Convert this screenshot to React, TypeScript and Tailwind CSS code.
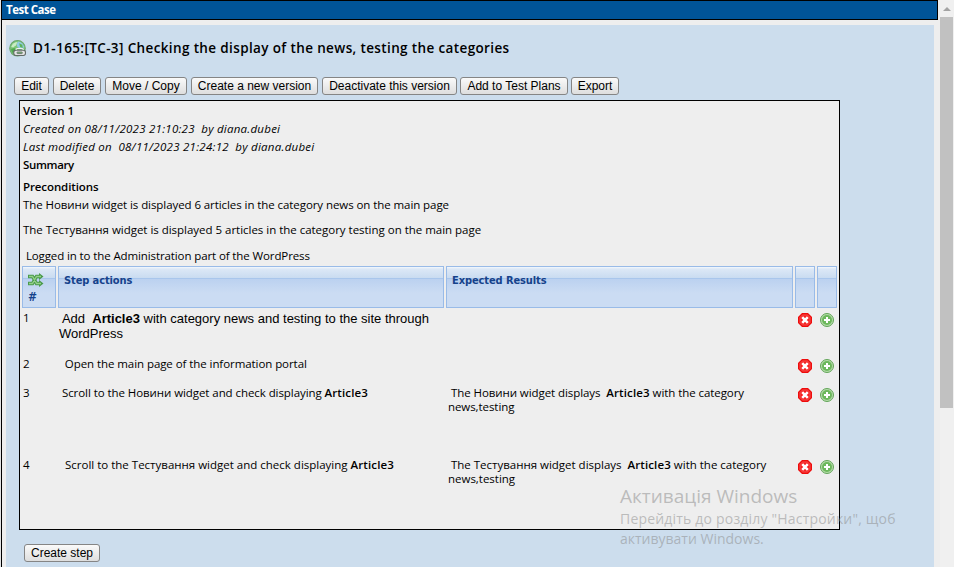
import React from "react";

const TREB = "font-['Trebuchet_MS','Open_Sans',sans-serif]";

function DeleteIcon() {
  return (
    <svg width="14" height="14" viewBox="0 0 14 14" className="block">
      <path d="M4 0h6l4 4v6l-4 4H4l-4-4V4z" fill="#ee0c0c" />
      <path d="M4.500 1.500h5l3 3v5l-3 3h-5l-3-3v-5z" fill="#f5504f" />
      <path d="M4.500 2.500h5l2 2v5l-2 2h-5l-2-2v-5z" fill="#f52020" />
      <path d="M4.200 4.200l5.600 5.600M9.800 4.200l-5.600 5.600" stroke="#fff" strokeWidth="2.600" />
    </svg>
  );
}

function AddIcon() {
  return (
    <svg width="14" height="14" viewBox="0 0 14 14" className="block">
      <circle cx="7" cy="7" r="6.500" fill="#b5dba9" stroke="#62a558" />
      <circle cx="7" cy="7" r="5" fill="#6cb85c" />
      <path d="M7 4v6M4 7h6" stroke="#fff" strokeWidth="2" />
    </svg>
  );
}

function GlobeLinkIcon() {
  return (
    <svg width="17" height="17" viewBox="0 0 16 16" className="block">
      <circle cx="8" cy="7.800" r="7.300" fill="#7cc677" stroke="#6aa56c" />
      <path d="M8.500 1.500c3 .3 5 2.200 5.700 4.800l-1.700 3L8 6.500 7 4z" fill="#8fcbe6" />
      <path d="M9.500 3l3 1.500.5 3-2.500-1z" fill="#5fb358" />
      <path d="M2 8.500l3-1 2 2-2 4C3.500 13 2 10.500 2 8.500z" fill="#4fa84e" />
      <path d="M2 6.500C3 3.500 5.500 1.800 8 1.800L6.500 5 4 7z" fill="#c9ebc4" />
      <rect x="4.500" y="9.500" width="11" height="5" rx="2" fill="#e4e4e4" stroke="#626b67" />
      <rect x="7.500" y="11.300" width="5" height="1.500" rx=".5" fill="#7cc677" stroke="#626b67" strokeWidth=".8" />
      <path d="M6.500 9.500q0-1.500 1.500-1.500h4q1.500 0 1.500 1.500" fill="none" stroke="#f1f1f1" />
    </svg>
  );
}

function ShuffleIcon() {
  return (
    <svg width="16" height="14" viewBox="0 0 16 14" className="block">
      <path d="M0 3.500h4.500l4 7H12M0 10.500h4.500l4-7H12" fill="none" stroke="#4a9a4b" strokeWidth="3.400" />
      <path d="M11 0l4.500 3.500L11 7zM11 7l4.500 3.500L11 14z" fill="#4a9a4b" />
      <path d="M1 3.500h3.500l4 7H13M1 10.500h3.500l4-7H13" fill="none" stroke="#93d089" strokeWidth="1.300" />
    </svg>
  );
}

function Btn({ label, w }: { label: string; w: string }) {
  return (
    <button
      className={`${w} h-[18px] shrink-0 whitespace-nowrap rounded-[3px] border border-[#858585] bg-linear-to-b from-[#fafafa] to-[#dedede] text-center font-['Liberation_Sans',Arial,sans-serif] text-[12px] leading-[16px] text-black`}
    >
      {label}
    </button>
  );
}

function HeadCell({ children }: { children?: React.ReactNode }) {
  return (
    <div className="h-[42px] border border-[#99bbe8] bg-[linear-gradient(to_bottom,#f4f8fd_0px,#dce8f6_2px,#c9dbf1_11px,#a9c6ec_11px,#a9c6ec_12px,#bbd1f0_12px,#cbdcf3_26px,#cbdcf3_40px)] pl-[5px] pt-[6px] font-['DejaVu_Sans_Condensed','DejaVu_Sans',sans-serif] text-[11px] font-bold leading-[16px] tracking-[-0.100px] text-[#15428b]">
      {children}
    </div>
  );
}

const GRID = "grid grid-cols-[34px_386px_347px_20px_20px] gap-x-[2px]";

function Strong({ children }: { children: React.ReactNode }) {
  return <b className="font-semibold tracking-[0.120px]">{children}</b>;
}

interface RowProps {
  n: number;
  h: string;
  action: React.ReactNode;
  result?: React.ReactNode;
  textPad?: string;
  iconPad?: string;
}

function Row({ n, h, action, result, textPad = "pt-0", iconPad = "pt-[2px]" }: RowProps) {
  return (
    <div className={`${GRID} ${h} text-[11.500px] leading-[14px] tracking-[-0.070px]`}>
      <div className={`pl-px ${textPad}`}>{n}</div>
      <div className={`whitespace-pre pl-px ${textPad}`}>{action}</div>
      <div className={`whitespace-pre pl-[2px] ${textPad}`}>{result}</div>
      <div className={`pl-[3px] ${iconPad}`}><DeleteIcon /></div>
      <div className={`pl-[3px] ${iconPad}`}><AddIcon /></div>
    </div>
  );
}

export default function App() {
  return (
    <div className={`${TREB} relative flex h-[567px] w-[954px] overflow-hidden bg-[#eeeeee] text-[11.500px] text-black`}>
      <div className="w-px bg-[#e4e4e4]" />
      <div className="w-[937px] border-l border-black">
        <div className="h-5 border-y border-r border-black bg-[#005498] pl-1 text-[11.500px] font-bold leading-[18px] text-white">
          <span className="tracking-[-0.500px]">Test Case</span>
        </div>
        <div className="ml-1 mt-[5px] h-[542px] w-[928px] bg-[#ccdded] pt-[13px]">
          <div className="flex h-5 items-center pl-[3px]">
            <GlobeLinkIcon />
            <h1 className="ml-[7px] whitespace-nowrap text-[13.500px] font-semibold leading-5 tracking-[0.370px]">D1-165:[TC-3] Checking the display of the news, testing the categories</h1>
          </div>
          <div className="mt-[19px] flex gap-1 pl-2">
            <Btn label="Edit" w="w-[35px]" />
            <Btn label="Delete" w="w-[48px]" />
            <Btn label="Move / Copy" w="w-[82px]" />
            <Btn label="Create a new version" w="w-[127px]" />
            <Btn label="Deactivate this version" w="-mr-px w-[135px]" />
            <Btn label="Add to Test Plans" w="-mr-px w-[108px]" />
            <Btn label="Export" w="w-[48px]" />
          </div>
          <div className="ml-[13px] mt-[5px] h-[430px] w-[821px] whitespace-pre border border-black bg-[#eeeeee] pl-[2px] pt-px">
            <div className="pl-px leading-[18px]">
              <div className="font-semibold tracking-[-0.050px]">Version 1</div>
              <div className="italic tracking-[0.250px]">Created on 08/11/2023 21:10:23  by diana.dubei</div>
              <div className="italic tracking-[0.260px]">Last modified on  08/11/2023 21:24:12  by diana.dubei</div>
              <div className="font-semibold tracking-[-0.350px]">Summary</div>
              <div className="mt-1 font-semibold tracking-[-0.100px]">Preconditions</div>
              <div className="tracking-[-0.075px]">The Новини widget is displayed 6 articles in the category news on the main page</div>
              <div className="mt-[7px] tracking-[-0.020px]">The Тестування widget is displayed 5 articles in the category testing on the main page</div>
              <div className="mt-[8px] tracking-[-0.110px]"> Logged in to the Administration part of the WordPress</div>
            </div>
            <div className={`${GRID} mt-px`}>
              <HeadCell>
                <ShuffleIcon />
                <div className="pt-[2px] text-[12px]">#</div>
              </HeadCell>
              <HeadCell>Step actions</HeadCell>
              <HeadCell>Expected Results</HeadCell>
              <HeadCell />
              <HeadCell />
            </div>
            <Row n={1} h="h-[49px]" textPad="pt-[3px]" iconPad="pt-[5px]" action={<div className="font-['Liberation_Sans',Arial,sans-serif] text-[13px] leading-[15px] tracking-normal"> Add  <b>Article3</b> with category news and testing to the site through{"\n"}WordPress</div>} />
            <Row n={2} h="h-[29px]" action="  Open the main page of the information portal" />
            <Row n={3} h="h-[72px]" action={<> Scroll to the Новини widget and check displaying <Strong>Article3</Strong></>} result={<> The Новини widget displays  <Strong>Article3</Strong> with the category{"\n"}news,testing</>} />
            <Row n={4} h="h-[70px]" action={<span className="tracking-normal">  Scroll to the Тестування widget and check displaying <Strong>Article3</Strong></span>} result={<span className="tracking-[-0.010px]"> The Тестування widget displays  <Strong>Article3</Strong> with the category{"\n"}news,testing</span>} />
          </div>
          <div className="mt-[14px] flex pl-[18px]">
            <Btn label="Create step" w="w-[76px]" />
          </div>
        </div>
      </div>
      <div className="ml-[2px] w-[14px] bg-[#f0f0f0]">
        <div className="flex h-[17px] items-center justify-center">
          <svg width="8" height="4" viewBox="0 0 8 4"><path d="M4 0l4 4H0z" fill="#a3a3a3" /></svg>
        </div>
        <div className="h-[391px] w-[13px] bg-[#c1c1c1]" />
      </div>
      <div className="absolute left-[620px] top-[484px] whitespace-pre font-['Open_Sans',sans-serif] text-[14px] leading-5 text-[#888888]/50">
        <div className="text-[19px] leading-[25px]">Активація Windows</div>
        <div className="tracking-[0.190px]">Перейдіть до розділу "Настройки", щоб</div>
        <div>активувати Windows.</div>
      </div>
    </div>
  );
}
